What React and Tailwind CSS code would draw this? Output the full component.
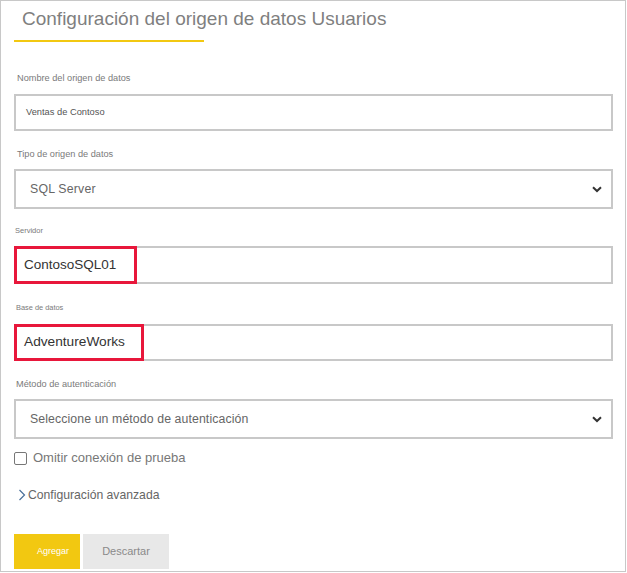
import React from "react";

const font = { fontFamily: '"Liberation Sans", Arial, sans-serif' };

function Chevron() {
  return (
    <svg width="10" height="7" viewBox="0 0 10 7" className="shrink-0">
      <path d="M1 1.2 L5 5 L9 1.2" fill="none" stroke="#333" strokeWidth="2" />
    </svg>
  );
}

function Label({ children, className = "" }) {
  return <div className={`text-[#7a7a7a] ${className}`}>{children}</div>;
}

export default function App() {
  return (
    <div className="bg-white w-[627px] h-[573px]" style={font}>
      <div className="w-[626px] h-[572px] border border-[#c8c8c8] pl-[13px] pr-[12px] flex flex-col">
        <div className="pt-[6px] pl-[8px] h-[31px] text-[19px] leading-[24px] text-[#7f7f7f]">
          Configuración del origen de datos Usuarios
        </div>
        <div className="mt-[8px] w-[190px] h-[2px] bg-[#f2c811]" />

        <Label className="mt-[29px] h-[14px] text-[9.2px] leading-[14px] pl-[3px]">Nombre del origen de datos</Label>
        <div className="mt-[9px] h-[37px] border-2 border-[#c8c8c8] flex items-center pl-[10px] text-[9.3px] text-[#555]">
          Ventas de Contoso
        </div>

        <Label className="mt-[16px] h-[14px] text-[9.2px] leading-[14px] pl-[3px]">Tipo de origen de datos</Label>
        <div className="mt-[8px] h-[40px] border-2 border-[#c8c8c8] flex items-center justify-between pl-[14px] pr-[9px] text-[12.3px] text-[#666] tracking-[0.2px]">
          <span>SQL Server</span>
          <Chevron />
        </div>

        <Label className="mt-[16px] h-[12px] text-[7.5px] leading-[12px] pl-[1px]">Servidor</Label>
        <div className="mt-[9px] relative h-[38px] border-2 border-[#c8c8c8] flex items-center pl-[8px] text-[13.5px] text-[#333]">
          ContosoSQL01
          <div className="absolute left-[-2px] top-[-2px] w-[123px] h-[38px] border-[3px] border-[#e8173b]" />
        </div>

        <Label className="mt-[18px] h-[12px] text-[7.4px] leading-[12px] pl-[2px]">Base de datos</Label>
        <div className="mt-[10px] relative h-[37px] border-2 border-[#c8c8c8] flex items-center pl-[8px] text-[13.7px] text-[#333]">
          AdventureWorks
          <div className="absolute left-[-2px] top-[-2px] w-[130px] h-[37px] border-[3px] border-[#e8173b]" />
        </div>

        <Label className="mt-[16px] h-[14px] text-[9.2px] leading-[14px] pl-[2px]">Método de autenticación</Label>
        <div className="mt-[8px] h-[40px] border-2 border-[#c8c8c8] flex items-center justify-between pl-[14px] pr-[9px] text-[12.3px] text-[#666] tracking-[0.1px]">
          <span>Seleccione un método de autenticación</span>
          <Chevron />
        </div>

        <div className="mt-[11px] h-[16px] flex items-center">
          <div className="w-[13px] h-[13px] border-[1.5px] border-[#777] rounded-[2px] bg-white" />
          <span className="ml-[6px] text-[13px] text-[#777]">Omitir conexión de prueba</span>
        </div>

        <div className="mt-[21px] h-[16px] flex items-center pl-[4px]">
          <svg width="8" height="12" viewBox="0 0 8 12" className="shrink-0">
            <path d="M1.5 1 L6.5 6 L1.5 11" fill="none" stroke="#4a6f9a" strokeWidth="1.2" />
          </svg>
          <span className="ml-[2px] text-[12.2px] text-[#666]">Configuración avanzada</span>
        </div>

        <div className="mt-[31px] flex gap-[3px]">
          <div className="w-[66px] h-[35px] bg-[#f2c811] flex items-center pl-[23px] text-[9px] text-white">
            Agregar
          </div>
          <div className="w-[86px] h-[35px] bg-[#e8e8e8] flex items-center justify-center text-[11px] text-[#8a8a8a]">
            Descartar
          </div>
        </div>
      </div>
    </div>
  );
}
